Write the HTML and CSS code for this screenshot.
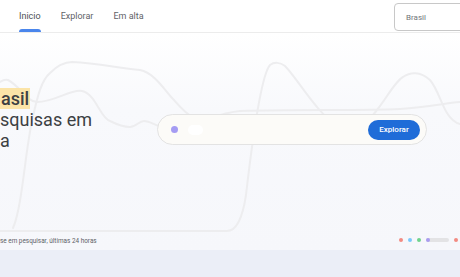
FILE: index.html
```html
<!DOCTYPE html>
<html lang="pt-BR">
<head>
    <meta charset="UTF-8">
    <meta name="viewport" content="width=device-width, initial-scale=1.0">
    <title>Google Trends</title>
    <link rel="stylesheet" href="styles.css">
</head>
<body>
    <!-- Top bar -->
    <header class="topbar">
        <nav class="tabs">
            <a class="tab active" href="#">Inicio</a>
            <a class="tab" href="#">Explorar</a>
            <a class="tab" href="#">Em alta</a>
        </nav>
        <div class="geo">Brasil</div>
    </header>

    <section class="hero">
        <svg class="waves" viewBox="0 0 460 217" preserveAspectRatio="none">
            <path d="M0,49 C3,47 5,46 8,47 C20,53 27,69 37,69 C55,69 70,56 82,58 C96,61 100,85 110,88 C118,92 124,94 130,94 C136,94 139,88 144,88 C151,88 156,94 166,95 C190,96 215,80 240,78 C300,76 360,78 400,76 C430,74 445,70 460,69"/>
            <path d="M13,195 C22,175 25,120 32,88 C38,60 42,47 50,40 C58,32 64,29 72,29 C100,30 120,36 140,37 C155,40 165,58 174,67 C180,74 185,80 195,86"/>
            <path d="M0,198 L227,198 C238,198 243,182 246,162 C252,110 261,42 270,32 C274,29 280,29 285,33 C293,41 305,60 317,74 C325,84 335,92 345,95"/>
            <path d="M362,92 C380,80 392,50 403,44 C410,39 420,38 430,47 C437,55 441,70 447,80 C452,88 456,90 460,91"/>
        </svg>

        <div class="hero-main">
            <h1 class="headline">
                <span class="line"><span class="cut">Descubra o que está em alta no <mark>Br</mark></span><mark>asil</mark></span>
                <span class="line"><span class="cut">com base nas pe</span>squisas em</span>
                <span class="line"><span class="cut">alt</span>a</span>
            </h1>
            <form class="search">
                <span class="pulse"></span>
                <span class="typing"></span>
                <button type="button" class="explore">Explorar</button>
            </form>
        </div>

        <div class="hero-foot">
            <p class="caption"><span class="cut">Termos em alta com ba</span>se em pesquisar, últimas 24 horas</p>
            <div class="dots">
                <span class="dot red"></span>
                <span class="dot blue"></span>
                <span class="dot green"></span>
                <span class="bar"><span class="dot purple"></span></span>
                <span class="dot red"></span>
            </div>
        </div>
    </section>

    <section class="below"></section>
</body>
</html>
```

FILE: styles.css
```css
html, body {
    margin: 0;
    padding: 0;
    overflow: hidden;
}

body {
    font-family: Roboto, "Noto Sans", Arial, sans-serif;
    background-color: #ebeef7;
    color: #3c4043;
}

/* top bar */
.topbar {
    display: flex;
    justify-content: space-between;
    align-items: center;
    height: 32px;
    background-color: #fff;
    border-bottom: 1px solid #ececec;
    overflow: hidden;
}

.tabs {
    display: flex;
    gap: 20px;
    padding-left: 19px;
    height: 100%;
}

.tab {
    position: relative;
    display: flex;
    align-items: center;
    height: 100%;
    font-size: 9px;
    color: #5f6368;
    text-decoration: none;
}

.tab.active {
    color: #4d5156;
}

.tab.active::after {
    content: "";
    position: absolute;
    left: 0;
    right: 0;
    bottom: 0;
    height: 3px;
    background-color: #4a86ec;
    border-radius: 3px 3px 0 0;
}

.geo {
    flex-shrink: 0;
    width: 130px;
    height: 26px;
    margin-right: -77px;
    margin-top: 2px;
    border: 1px solid #c8c8c8;
    border-radius: 4px;
    padding-left: 11px;
    display: flex;
    align-items: center;
    font-size: 8px;
    color: #70757a;
}

/* hero */
.hero {
    position: relative;
    height: 217px;
    display: flex;
    flex-direction: column;
    background: linear-gradient(180deg, #ffffff 0%, #f8f9fc 35%, #f6f7fb 100%);
    overflow: hidden;
}

.waves {
    position: absolute;
    top: 0;
    left: 0;
    width: 460px;
    height: 217px;
    fill: none;
    stroke: #ededef;
    stroke-width: 2;
    stroke-linecap: round;
}

.hero-main {
    position: relative;
    display: flex;
    align-items: flex-start;
    padding-top: 55px;
}

.headline {
    flex-shrink: 0;
    width: 157px;
    margin: 0;
    font-size: 18px;
    font-weight: 400;
    line-height: 21px;
    color: #3c4043;
}

.line {
    display: block;
    margin-left: -260px;
    white-space: nowrap;
}

.cut {
    display: inline-block;
    width: 260px;
    overflow: hidden;
    text-align: right;
    vertical-align: bottom;
    white-space: nowrap;
}

mark {
    background-color: #fbe4a8;
    color: #3c4043;
    font-weight: 500;
    padding: 0 1px;
}

.search {
    display: flex;
    align-items: center;
    width: 270px;
    height: 31px;
    margin: 26px 0 0;
    padding: 0 6px 0 13px;
    box-sizing: border-box;
    background-color: #fcfbf8;
    border: 1px solid #e3e3e3;
    border-radius: 16px;
}

.pulse {
    width: 7px;
    height: 7px;
    border-radius: 50%;
    background-color: #a59cf3;
}

.typing {
    width: 15px;
    height: 10px;
    margin-left: 10px;
    border-radius: 5px;
    background-color: #fff;
}

.explore {
    margin-left: auto;
    width: 52px;
    height: 20px;
    border: none;
    border-radius: 10px;
    background-color: #1f6cd8;
    color: #fff;
    font-family: Roboto, Arial, sans-serif;
    font-size: 8px;
    font-weight: 500;
    padding: 0;
}

.hero-foot {
    position: relative;
    margin-top: auto;
    display: flex;
    justify-content: space-between;
    align-items: center;
    height: 14px;
    padding-bottom: 3px;
}

.caption {
    margin: 0 0 0 -110px;
    font-size: 6.4px;
    color: #5f6368;
    white-space: nowrap;
}

.caption .cut {
    width: 110px;
    vertical-align: baseline;
}

.dots {
    display: flex;
    align-items: center;
    gap: 5px;
    margin-right: 2px;
}

.dot {
    display: block;
    width: 4px;
    height: 4px;
    border-radius: 50%;
}

.dot.red { background-color: #f28b82; }
.dot.blue { background-color: #7cc8fb; }
.dot.green { background-color: #6fd38c; }
.dot.purple { background-color: #a99cf0; }

.bar {
    display: flex;
    width: 23px;
    height: 4px;
    border-radius: 2px;
    background-color: #e3e3e5;
}

.below {
    height: 40px;
    background-color: #ebeef7;
}
```
